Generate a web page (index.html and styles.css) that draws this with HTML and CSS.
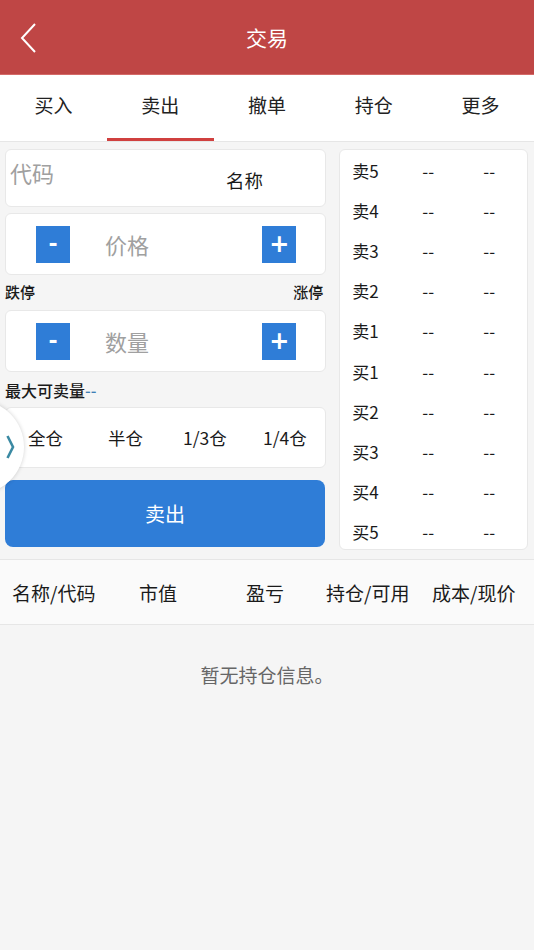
FILE: index.html
```html
<!DOCTYPE html>
<html lang="zh-CN">
<head>
    <meta charset="UTF-8">
    <meta name="viewport" content="width=device-width, initial-scale=1.0">
    <title>交易</title>
    <link rel="stylesheet" href="styles.css">
</head>
<body>
    <header class="top-bar">
        <a class="back" href="#">
            <svg width="18" height="32" viewBox="0 0 18 32"><path d="M16 2 L3 16 L16 30" fill="none" stroke="#fff" stroke-width="2"/></svg>
        </a>
        <h1>交易</h1>
    </header>

    <nav class="tabs">
        <div class="tab">买入</div>
        <div class="tab active">卖出</div>
        <div class="tab">撤单</div>
        <div class="tab">持仓</div>
        <div class="tab">更多</div>
    </nav>

    <div class="trade">
        <div class="form-col">
            <div class="card code-card">
                <span class="placeholder code">代码</span>
                <span class="name">名称</span>
            </div>

            <div class="card stepper">
                <button class="step minus">-</button>
                <span class="placeholder">价格</span>
                <button class="step plus">+</button>
            </div>
            <div class="limits">
                <span>跌停</span>
                <span>涨停</span>
            </div>

            <div class="card stepper">
                <button class="step minus">-</button>
                <span class="placeholder">数量</span>
                <button class="step plus">+</button>
            </div>
            <div class="max-qty">最大可卖量<span class="dash">--</span></div>

            <div class="card ratio-card">
                <span>全仓</span>
                <span>半仓</span>
                <span>1/3仓</span>
                <span>1/4仓</span>
            </div>

            <button class="sell-btn">卖出</button>
        </div>

        <div class="card quote">
            <div class="quote-row"><span>卖5</span><span>--</span><span>--</span></div>
            <div class="quote-row"><span>卖4</span><span>--</span><span>--</span></div>
            <div class="quote-row"><span>卖3</span><span>--</span><span>--</span></div>
            <div class="quote-row"><span>卖2</span><span>--</span><span>--</span></div>
            <div class="quote-row"><span>卖1</span><span>--</span><span>--</span></div>
            <div class="quote-row"><span>买1</span><span>--</span><span>--</span></div>
            <div class="quote-row"><span>买2</span><span>--</span><span>--</span></div>
            <div class="quote-row"><span>买3</span><span>--</span><span>--</span></div>
            <div class="quote-row"><span>买4</span><span>--</span><span>--</span></div>
            <div class="quote-row"><span>买5</span><span>--</span><span>--</span></div>
        </div>

        <div class="side-tab">
            <svg width="9" height="24" viewBox="0 0 9 24"><path d="M1.5 1 L7 12 L1.5 23" fill="none" stroke="#3b8aa3" stroke-width="2.6"/></svg>
        </div>
    </div>

    <div class="hold-head">
        <span>名称/代码</span>
        <span>市值</span>
        <span>盈亏</span>
        <span>持仓/可用</span>
        <span>成本/现价</span>
    </div>
    <div class="empty">暂无持仓信息。</div>
</body>
</html>
```

FILE: styles.css
```css
:root {
    --red: #bf4645;
    --blue: #2f7dd7;
    --bg: #f5f5f5;
    --border: #e6e6e6;
    --text: #1a1a1a;
    --muted: #a0a0a0;
}

* {
    margin: 0;
    padding: 0;
    box-sizing: border-box;
}

body {
    font-family: "Noto Sans CJK SC", "Noto Sans", sans-serif;
    background: var(--bg);
    color: var(--text);
    width: 534px;
    min-height: 950px;
}

.top-bar {
    height: 75px;
    background: var(--red);
    display: flex;
    align-items: center;
    justify-content: center;
    position: relative;
    border-bottom: 1px solid #d46a68;
}

.top-bar h1 {
    color: #fff;
    font-size: 21px;
    font-weight: 400;
}

.back {
    position: absolute;
    left: 19px;
    top: 22px;
    display: flex;
}

.tabs {
    display: flex;
    height: 67px;
    background: #fff;
    border-bottom: 1px solid var(--border);
}

.tab {
    flex: 1;
    display: flex;
    align-items: center;
    justify-content: center;
    font-size: 19px;
    color: #222;
    padding-bottom: 4px;
    border-bottom: 3px solid transparent;
}

.tab.active {
    border-bottom-color: #d0403f;
}

.trade {
    position: relative;
    display: flex;
    gap: 13px;
    padding: 7px 6px 0 5px;
}

.form-col {
    width: 322px;
    display: flex;
    flex-direction: column;
}

.card {
    background: #fff;
    border: 1px solid #e8e8e8;
    border-radius: 6px;
}

.code-card {
    height: 58px;
    display: flex;
    align-items: flex-start;
    padding: 6px 0 0 4px;
    margin-bottom: 6px;
}

.placeholder {
    color: var(--muted);
    font-size: 22px;
}

.name {
    font-size: 18.5px;
    margin: 11px 0 0 172px;
}

.stepper {
    height: 62px;
    display: flex;
    align-items: center;
    padding: 0 29px 0 30px;
}

.stepper .placeholder {
    flex: 1;
    padding-left: 35px;
}

.step {
    width: 34px;
    height: 37px;
    border: none;
    background: var(--blue);
    color: #fff;
    font-family: "DejaVu Sans", sans-serif;
    font-weight: 700;
    font-size: 24px;
    line-height: 1;
}

.step.minus {
    font-size: 22px;
}

.limits {
    height: 35px;
    display: flex;
    justify-content: space-between;
    align-items: center;
    font-size: 15px;
    font-weight: 500;
    padding: 0 3px 2px 0;
}

.max-qty {
    height: 35px;
    display: flex;
    align-items: center;
    font-size: 16px;
    font-weight: 500;
}

.dash {
    color: #3f7fb5;
}

.ratio-card {
    height: 61px;
    display: grid;
    grid-template-columns: 80px 75px 80px auto;
    align-items: center;
    padding-left: 22px;
    font-size: 17.5px;
}

.sell-btn {
    margin-top: 12px;
    height: 67px;
    width: 320px;
    border: none;
    border-radius: 8px;
    background: var(--blue);
    color: #fff;
    font-family: inherit;
    font-size: 20px;
}

.quote {
    width: 189px;
    height: 401px;
    padding: 0 0 0 12px;
}

.quote-row {
    height: 40.2px;
    display: flex;
    align-items: center;
    font-size: 17px;
}

.quote-row span:first-child {
    width: 70px;
}

.quote-row span:nth-child(2) {
    width: 61px;
}

.side-tab {
    position: absolute;
    left: -70px;
    top: 258px;
    width: 94px;
    height: 94px;
    border-radius: 50%;
    background: #fff;
    box-shadow: 0 0 4px rgba(0, 0, 0, 0.18);
    display: flex;
    align-items: center;
    justify-content: flex-end;
    padding-right: 9px;
}

.hold-head {
    margin-top: 9px;
    height: 66px;
    background: #fafafa;
    border-top: 1px solid var(--border);
    border-bottom: 1px solid var(--border);
    display: grid;
    grid-template-columns: 127px 107px 80px 106px auto;
    align-items: center;
    padding-left: 12px;
    font-size: 19px;
}

.empty {
    text-align: center;
    color: #666;
    font-size: 19px;
    padding-top: 36px;
}
```
